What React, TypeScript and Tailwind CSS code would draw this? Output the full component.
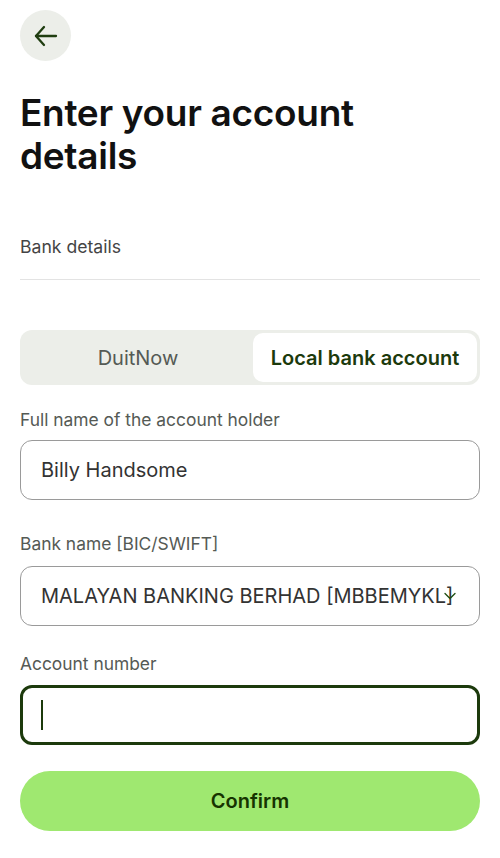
import { ChevronDown } from 'lucide-react'

function Label({ children }: { children: React.ReactNode }) {
  return <div className="text-[17.4px] leading-[22px] text-[#555a55]">{children}</div>
}

export default function App() {
  return (
    <div className="min-h-[858px] bg-white px-5 pt-[10px] font-['Inter',sans-serif] text-[#111]">
      <button className="flex h-[51px] w-[51px] items-center justify-center rounded-full bg-[#eceee9]">
        <svg width="24" height="22" viewBox="0 0 24 22" fill="none" stroke="#1f3d10" strokeWidth="2.3" strokeLinecap="round" strokeLinejoin="round">
          <path d="M2 11h20" />
          <path d="M10 2 2 11l8 9" />
        </svg>
      </button>

      <h1 className="mt-[30px] w-[400px] text-[37px] font-semibold leading-[43px] tracking-[-0.3px]">
        Enter your account details
      </h1>

      <div className="mt-[59px] text-[17.6px] leading-[22px] text-[#444]">Bank details</div>
      <div className="mt-[21px] h-px bg-[#e3e3e3]" />

      <div className="mt-[50px] flex h-[55px] rounded-[12px] bg-[#eceee9] p-[3px]">
        <div className="flex flex-1 items-center justify-center text-[20px] text-[#555a55]">DuitNow</div>
        <div className="flex w-[224px] items-center justify-center rounded-[10px] bg-white text-[20px] font-semibold text-[#1c3a0c]">
          Local bank account
        </div>
      </div>

      <div className="mt-[24px]">
        <Label>Full name of the account holder</Label>
      </div>
      <div className="mt-[9px] flex h-[60px] items-center rounded-[12px] border border-[#9a9a9a] px-5 text-[20px] text-[#333]">
        Billy Handsome
      </div>

      <div className="mt-[33px]">
        <Label>Bank name [BIC/SWIFT]</Label>
      </div>
      <div className="relative mt-[11px] flex h-[60px] items-center overflow-hidden rounded-[12px] border border-[#9a9a9a] pl-5 text-[20px] text-[#333]">
        <span className="whitespace-nowrap">MALAYAN BANKING BERHAD [MBBEMYKL]</span>
        <ChevronDown size={20} strokeWidth={1.6} className="absolute left-[419px] top-[19px] text-[#1f4d10]" />
      </div>

      <div className="mt-[27px]">
        <Label>Account number</Label>
      </div>
      <div className="mt-[10px] flex h-[60px] items-center rounded-[12px] border-[3px] border-[#1c3a0c] px-[18px]">
        <div className="h-[30px] w-[2px] bg-[#1c3a0c]" />
      </div>

      <button className="mt-[26px] flex h-[60px] w-full items-center justify-center rounded-full bg-[#9fe870] text-[20px] font-semibold text-[#163300]">
        Confirm
      </button>
    </div>
  )
}
